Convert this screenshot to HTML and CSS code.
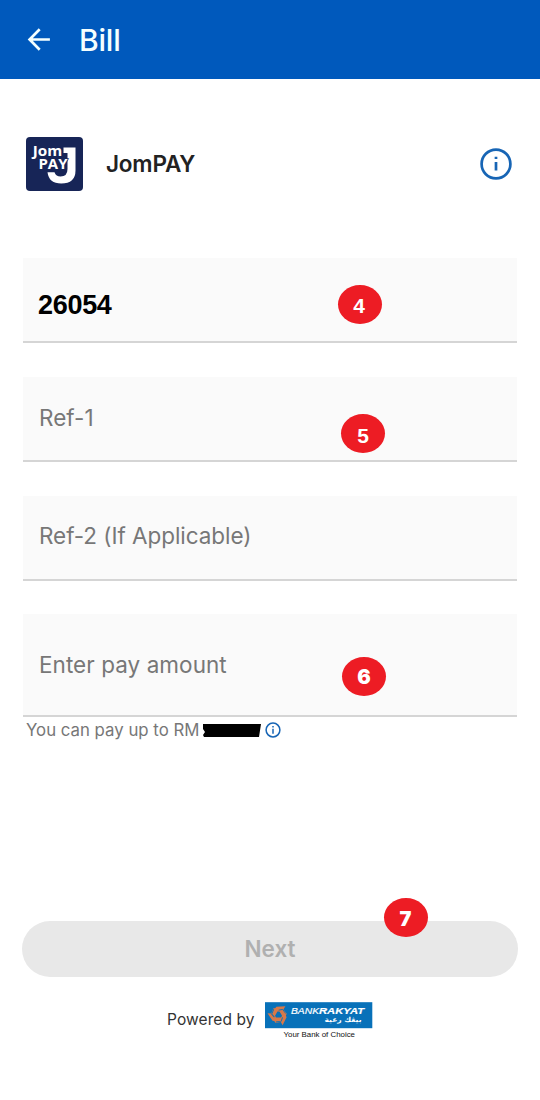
FILE: index.html
```html
<!DOCTYPE html>
<html lang="en">
<head>
<meta charset="utf-8">
<title>Bill</title>
<link rel="stylesheet" href="styles.css">
</head>
<body>
<header class="topbar">
  <svg class="back" viewBox="0 0 24 24" width="24" height="24"><path d="M22.9 11.5H2.6M12.7 1.3 2.6 11.5l10.1 10.2"/></svg>
  <h1 class="title">Bill</h1>
</header>
<main class="page">
  <section class="biller">
    <svg class="biller-logo" viewBox="0 0 57 54" width="57" height="54">
      <rect width="57" height="54" rx="4" fill="#172557"/>
      <path d="M37.5 10.5H49.5V33.5Q49.5 46.5 35.2 46.5Q23 46.5 21.5 35.2H28.5Q30 39.5 34.5 39.5Q41.5 39.5 41.5 32V16H37.5Z" fill="#fff"/>
      <text class="jom" x="6.8" y="18.9" textLength="29.5" lengthAdjust="spacingAndGlyphs">Jom</text>
      <text class="jom pay" x="12.5" y="31.7" textLength="29" lengthAdjust="spacingAndGlyphs">PAY</text>
    </svg>
    <h2 class="biller-name">JomPAY</h2>
    <svg class="info" viewBox="0 0 32 32" width="32" height="32"><circle cx="16" cy="16" r="14.4"/><path d="M16 14v8.5M16 8.7v2.3"/></svg>
  </section>
  <form class="form">
    <div class="field"><span class="value">26054</span><span class="step step-4">4</span></div>
    <div class="field"><span class="label">Ref-1</span><span class="step step-5">5</span></div>
    <div class="field"><span class="label label-wide">Ref-2 (If Applicable)</span></div>
    <div class="field amount"><span class="label label-amount">Enter pay amount</span><span class="step step-6">6</span></div>
    <div class="hint"><span class="hint-text">You can pay up to RM</span>
      <svg class="mask" viewBox="0 0 58 13" width="58" height="13"><path d="M0 0H58L56 13H1L0 11 2 8 0 5Z"/></svg>
      <svg class="info info-small" viewBox="0 0 16 16" width="16" height="16"><circle cx="8" cy="8" r="6.9"/><path d="M8 6.7v5M8 4v1.4"/></svg>
    </div>
  </form>
  <div class="next"><span>Next</span><span class="step step-7">7</span></div>
  <footer class="powered">
    <span class="powered-text">Powered by</span>
    <svg viewBox="0 0 108 40" width="108" height="40">
      <rect width="107.3" height="26" y="0.2" fill="#0871b9"/>
      <g fill="#d87848">
        <path id="blade" d="M7.6 9.6 11.4 4.8 20.4 4.2 18.4 7.4 21.8 11.8 20.2 14.6 15.4 9.4 12.4 9.4 9.8 14.2 6.2 14.4Z"/>
        <use href="#blade" transform="rotate(120 13.5 12.9)"/>
        <use href="#blade" transform="rotate(240 13.5 12.9)"/>
      </g>
      <g fill="none" stroke="#0871b9" stroke-width="0.9">
        <path id="groove" d="M13.6 8.2 17.6 7.4 20.8 11.6"/>
        <use href="#groove" transform="rotate(120 13.5 12.9)"/>
        <use href="#groove" transform="rotate(240 13.5 12.9)"/>
      </g>
      <text class="bank" x="26" y="12.4" textLength="28" lengthAdjust="spacingAndGlyphs">BANK</text>
      <text class="bank rakyat" x="54" y="12.4" textLength="45" lengthAdjust="spacingAndGlyphs">RAKYAT</text>
      <text class="jawi" x="59.5" y="19.5" textLength="37" lengthAdjust="spacingAndGlyphs">بيڠك رعية</text>
      <text class="tag" x="18.5" y="35.3" textLength="71.5" lengthAdjust="spacingAndGlyphs">Your Bank of Choice</text>
    </svg>
  </footer>
</main>
</body>
</html>
```
FILE: styles.css
```css
* { box-sizing: border-box; }
body { margin: 0; background: #fff; font-family: Inter, Roboto, sans-serif; }
h1, h2 { margin: 0; }
.topbar { display: flex; align-items: center; height: 79px; padding: 0 27px; background: #0059bc; color: #f4ffff; }
.back { fill: none; stroke: #f4ffff; stroke-width: 2.7; }
.title { margin-left: 28px; padding-top: 1px; font-size: 30px; font-weight: 500; letter-spacing: -0.2px; }
.page { padding: 58px 22px 0; }
.biller { display: flex; align-items: center; height: 54px; padding: 0 6px 0 4px; }
.jom { font: 700 15px "Open Sans", sans-serif; fill: #fff; }
.pay { font-size: 14.5px; stroke: #172557; stroke-width: 1.6px; paint-order: stroke; }
.biller-name { margin-left: 23px; padding-bottom: 2px; font-size: 22.5px; font-weight: 600; letter-spacing: -0.2px; color: #222; }
.info { margin-left: auto; fill: none; stroke: #1765b5; stroke-width: 2.7; }
.form { display: flex; flex-direction: column; gap: 34px; margin: 67px 1px 0 1px; }
.field { position: relative; display: flex; align-items: center; height: 85px; padding: 0 16px; background: #fafafa; border-bottom: 2px solid #d5d5d5; }
.amount { height: 103px; margin-top: -1px; }
.value { margin-left: -1px; padding-top: 11px; font: 700 27px "Liberation Sans", sans-serif; letter-spacing: -0.3px; color: #000; }
.label { padding-bottom: 2px; font-size: 22.5px; letter-spacing: 0.05px; color: #777; }
.label-wide { padding-bottom: 4px; letter-spacing: -0.05px; }
.label-amount { padding-bottom: 0; }
.step { position: absolute; display: flex; align-items: center; justify-content: center; width: 44px; height: 39px; padding-top: 3px; border-radius: 50%; background: #ed1c24; color: #fff; font: 700 21px "Liberation Sans", sans-serif; }
.step-4 { left: 315px; top: 27px; padding-right: 2px; }
.step-5 { left: 318px; top: 37px; padding-top: 4px; }
.step-6 { left: 319px; top: 43px; padding-top: 1px; font-family: Inter, sans-serif; font-weight: 900; font-size: 20px; }
.step-7 { left: 362px; top: -23px; padding-right: 1px; font-family: Inter, sans-serif; font-weight: 900; font-size: 20px; }
.hint { display: flex; align-items: center; height: 20px; margin-top: -31px; padding-left: 3px; font-size: 16.8px; color: #777; }
.hint-text { padding-bottom: 1px; }
.mask { margin-left: 4px; }
.info-small { margin-left: 4px; stroke-width: 1.5; }
.next { position: relative; display: flex; align-items: center; justify-content: center; height: 56px; margin: 181px 0 0; padding-bottom: 1px; border-radius: 28px; background: #e8e8e8; color: #b0b0b0; font-size: 22.5px; font-weight: 600; }
.powered { display: flex; align-items: flex-start; margin-top: 25px; padding-left: 145px; }
.powered-text { width: 98px; padding-top: 8px; font-size: 15.5px; line-height: 20px; letter-spacing: 0.1px; color: #333; }
.bank { font: italic 400 9.5px "Liberation Sans", sans-serif; fill: #fff; stroke: #fff; stroke-width: 0.2px; }
.rakyat { font-weight: 700; }
.jawi { font: 700 7px "DejaVu Sans", sans-serif; fill: #fff; }
.tag { font: 8px "Liberation Sans", sans-serif; fill: #111; }
```
